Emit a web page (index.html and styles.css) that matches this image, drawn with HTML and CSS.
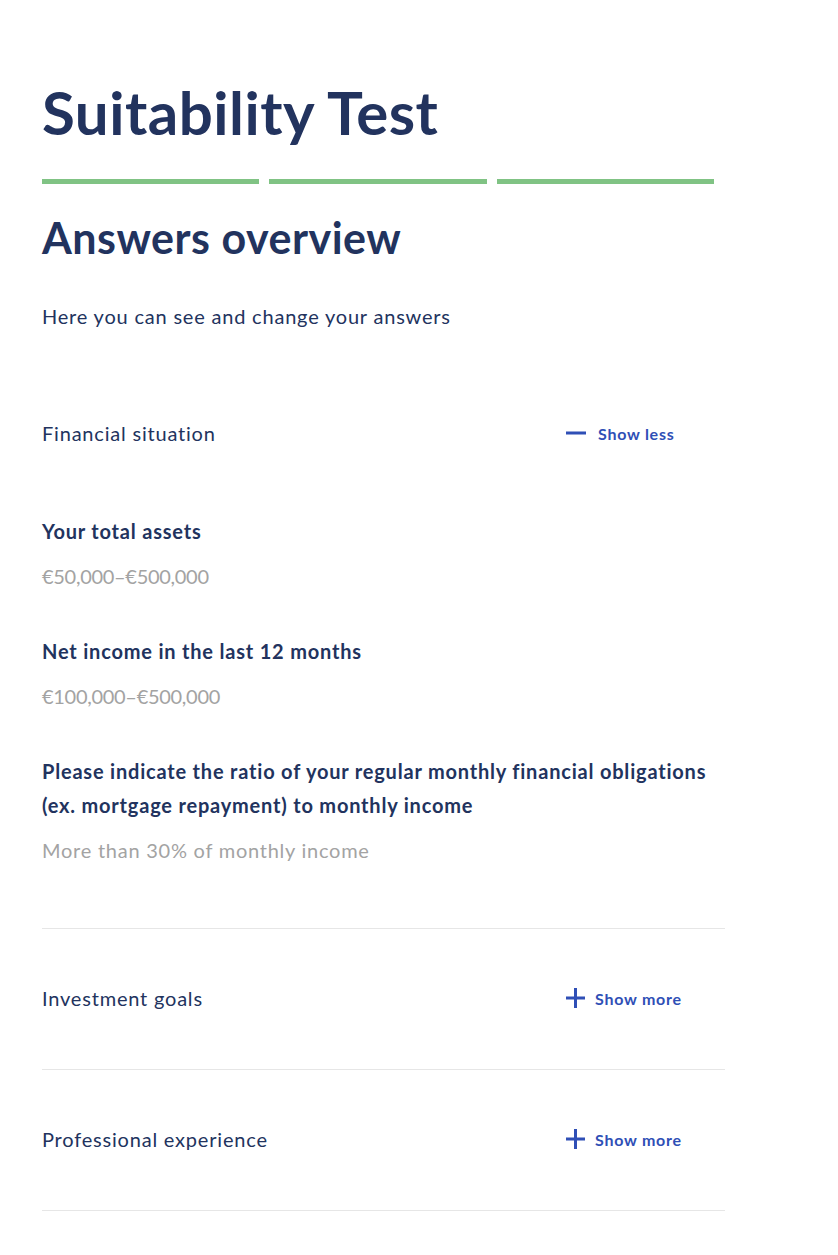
FILE: index.html
```html
<!DOCTYPE html>
<html lang="en">
<head>
<meta charset="utf-8">
<title>Suitability Test</title>
<link rel="stylesheet" href="styles.css">
</head>
<body>
<main class="page">
  <h1 class="title">Suitability Test</h1>
  <div class="progress">
    <span class="progress-bar"></span>
    <span class="progress-bar"></span>
    <span class="progress-bar"></span>
  </div>
  <h2 class="subtitle">Answers overview</h2>
  <p class="intro">Here you can see and change your answers</p>

  <section class="group">
    <div class="group-head">
      <span class="group-name">Financial situation</span>
      <button class="toggle" type="button">
        <svg class="toggle-icon" width="20" height="20" viewBox="0 0 20 20"><rect x="0" y="8.5" width="20" height="3" fill="currentColor"/></svg>
        <span class="toggle-text">Show less</span>
      </button>
    </div>
    <div class="answers">
      <div class="answer">
        <div class="question">Your total assets</div>
        <div class="value value-num">€50,000–€500,000</div>
      </div>
      <div class="answer">
        <div class="question">Net income in the last 12 months</div>
        <div class="value value-num">€100,000–€500,000</div>
      </div>
      <div class="answer">
        <div class="question">Please indicate the ratio of your regular monthly financial obligations (ex. mortgage repayment) to monthly income</div>
        <div class="value">More than 30% of monthly income</div>
      </div>
    </div>
  </section>

  <section class="group">
    <div class="group-head">
      <span class="group-name">Investment goals</span>
      <button class="toggle toggle-more" type="button">
        <svg class="toggle-icon" width="20" height="20" viewBox="0 0 20 20"><rect x="0" y="8.5" width="19" height="3" fill="currentColor"/><rect x="8" y="0" width="3" height="20" fill="currentColor"/></svg>
        <span class="toggle-text">Show more</span>
      </button>
    </div>
  </section>

  <section class="group">
    <div class="group-head">
      <span class="group-name">Professional experience</span>
      <button class="toggle toggle-more" type="button">
        <svg class="toggle-icon" width="20" height="20" viewBox="0 0 20 20"><rect x="0" y="8.5" width="19" height="3" fill="currentColor"/><rect x="8" y="0" width="3" height="20" fill="currentColor"/></svg>
        <span class="toggle-text">Show more</span>
      </button>
    </div>
  </section>
</main>
</body>
</html>
```

FILE: styles.css
```css
* { box-sizing: border-box; }

body {
  margin: 0;
  background: #ffffff;
  color: #22335e;
  font-family: "Source Sans Pro", Lato, "Noto Sans", sans-serif;
}

.page {
  width: 725px;
  padding: 70px 0 40px 42px;
}

.title {
  margin: 0;
  font-size: 60px;
  line-height: 84px;
  font-weight: 700;
  letter-spacing: 0.5px;
}

.progress {
  display: flex;
  gap: 10px;
  width: 672px;
  margin-top: 25px;
}

.progress-bar {
  flex: 1;
  height: 5px;
  background: #80c384;
}

.subtitle {
  margin: 26px 0 0;
  font-size: 43px;
  line-height: 56px;
  font-weight: 700;
  letter-spacing: 0.5px;
}

.intro {
  margin: 33px 0 0;
  font-size: 20px;
  line-height: 34px;
  letter-spacing: 0.8px;
}

.group {
  padding: 52px 0 54px;
  border-bottom: 1px solid #e6e6e6;
}

.group:first-of-type {
  margin-top: 30px;
  padding-top: 53px;
  padding-bottom: 61px;
}

.group-head {
  display: grid;
  grid-template-columns: 1fr 159px;
  align-items: center;
  height: 34px;
}

.group-name {
  font-size: 20px;
  line-height: 34px;
  letter-spacing: 0.8px;
}

.toggle {
  display: flex;
  align-items: center;
  gap: 12px;
  padding: 0;
  border: 0;
  background: none;
  color: #2f4fb6;
  font-family: inherit;
  font-size: 16px;
  font-weight: 700;
  letter-spacing: 0.75px;
  cursor: pointer;
}

.toggle-more { gap: 9px; }

.toggle-icon { display: block; }

.answers {
  margin-top: 64px;
  display: flex;
  flex-direction: column;
  gap: 41px;
}

.question {
  font-size: 20px;
  line-height: 34px;
  font-weight: 700;
  letter-spacing: 0.8px;
}

.value {
  margin-top: 11px;
  font-size: 20px;
  line-height: 34px;
  color: #a3a3a3;
  letter-spacing: 0.75px;
}

.value-num { letter-spacing: -0.3px; }
```
